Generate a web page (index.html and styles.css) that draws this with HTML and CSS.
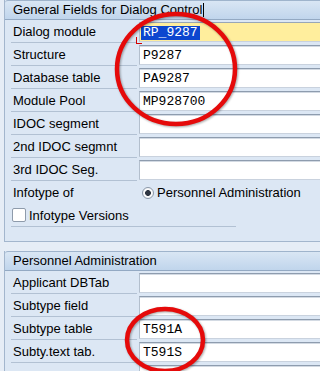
FILE: index.html
```html
<!DOCTYPE html>
<html lang="en">
<head>
  <meta charset="UTF-8" />
  <title>Dialog Control</title>
  <link rel="stylesheet" href="styles.css">
</head>
<body>
  <div class="screen">
    <section class="group">
      <div class="group-head">General Fields for Dialog Control<span class="caret"></span></div>
      <div class="row">
        <span class="lbl">Dialog module</span>
        <div class="fld focus"><span class="sel">RP_9287</span><i class="mark"></i></div>
      </div>
      <div class="row"><span class="lbl">Structure</span><div class="fld">P9287</div></div>
      <div class="row"><span class="lbl">Database table</span><div class="fld">PA9287</div></div>
      <div class="row"><span class="lbl">Module Pool</span><div class="fld">MP928700</div></div>
      <div class="row"><span class="lbl">IDOC segment</span><div class="fld"></div></div>
      <div class="row"><span class="lbl">2nd IDOC segmnt</span><div class="fld"></div></div>
      <div class="row"><span class="lbl">3rd IDOC Seg.</span><div class="fld"></div></div>
      <div class="row">
        <span class="lbl plain">Infotype of</span>
        <span class="radio"></span><span class="opt">Personnel Administration</span>
      </div>
      <div class="row">
        <span class="lbl wide"><span class="check"></span>Infotype Versions</span>
      </div>
    </section>

    <section class="group second">
      <div class="group-head">Personnel Administration</div>
      <div class="row"><span class="lbl">Applicant DBTab</span><div class="fld"></div></div>
      <div class="row"><span class="lbl">Subtype field</span><div class="fld"></div></div>
      <div class="row"><span class="lbl">Subtype table</span><div class="fld">T591A</div></div>
      <div class="row"><span class="lbl">Subty.text tab.</span><div class="fld">T591S</div></div>
      <div class="row"><span class="lbl"></span><div class="fld"></div></div>
    </section>

    <!-- hand drawn highlight circles -->
    <svg class="marks" width="320" height="371" viewBox="0 0 320 371">
      <ellipse cx="176" cy="69" rx="59" ry="55" />
      <ellipse cx="165" cy="340" rx="38" ry="31" />
    </svg>
  </div>
</body>
</html>
```

FILE: styles.css
```css
body {
  margin: 0;
  background-color: #e6edf6;
  font-family: 'Liberation Sans', Arial, sans-serif;
  font-size: 13px;
  color: #000;
}

.screen {
  position: relative;
  width: 320px;
  height: 371px;
  overflow: hidden;
}

.group {
  margin-left: 4px;
  padding-bottom: 14px;
  background-color: #dce7f4;
  border-left: 1px solid #a3b6cd;
  border-bottom: 1px solid #a3b6cd;
}

.group.second {
  margin-top: 9px;
}

.group-head {
  height: 20px;
  line-height: 18px;
  padding-left: 8px;
  border-top: 1px solid #9fb4cc;
  border-bottom: 1px solid #93a9c3;
  border-top-left-radius: 3px;
  background: linear-gradient(#d9e6f4, #c0d5ec);
  white-space: nowrap;
  box-sizing: border-box;
}

.caret {
  display: inline-block;
  width: 1px;
  height: 14px;
  margin-left: 1px;
  vertical-align: -3px;
  background-color: #000;
}

.row {
  display: flex;
  align-items: flex-start;
  height: 23px;
}

.lbl {
  display: flex;
  align-items: center;
  width: 126px;
  height: 23px;
  margin-left: 6px;
  padding-left: 2px;
  border-bottom: 1px solid #b2c1d3;
  box-sizing: border-box;
  white-space: nowrap;
}

.lbl.plain {
  border-bottom: none;
}

.lbl.wide {
  width: 225px;
}

.fld {
  position: relative;
  flex: 1;
  height: 20px;
  margin-top: 2px;
  margin-left: 2px;
  padding-left: 3px;
  background-color: #fff;
  border-top: 1px solid #8e9cae;
  border-left: 1px solid #b3bfcd;
  border-bottom: 1px solid #c9d2de;
  box-shadow: inset 0 1px #d3dae3;
  box-sizing: border-box;
  font-family: 'Liberation Mono', 'Courier New', monospace;
  font-size: 13px;
  line-height: 19px;
}

.fld.focus {
  background-color: #ffee9d;
  box-shadow: none;
  border-top-color: #98a6b6;
}

.sel {
  display: inline-block;
  margin-left: -2px;
  padding: 0 2px;
  line-height: 14px;
  background-color: #0c46cf;
  color: #fff;
}

.mark {
  position: absolute;
  left: -4px;
  bottom: -3px;
  width: 5px;
  height: 6px;
  border-left: 1px solid #d40000;
  border-bottom: 1px solid #d40000;
}

.radio {
  width: 10px;
  height: 10px;
  margin: 6px 0 0 5px;
  border: 1px solid #8b98a8;
  border-radius: 50%;
  background: radial-gradient(circle, #2f3642 0 2.6px, #fdfdfd 3.2px, #e6ebf1 100%);
  flex: none;
}

.opt {
  margin-left: 3px;
  line-height: 23px;
  white-space: nowrap;
}

.check {
  width: 12px;
  height: 12px;
  margin: 0 3px 0 -1px;
  border: 1px solid #8e9bab;
  border-radius: 2px;
  background-color: #fff;
  flex: none;
}

.marks {
  position: absolute;
  left: 0;
  top: 0;
  filter: drop-shadow(1px 1px 1px rgba(0,0,0,0.35));
}

.marks ellipse {
  fill: none;
  stroke: #e50a0a;
  stroke-width: 4.5;
}
```
